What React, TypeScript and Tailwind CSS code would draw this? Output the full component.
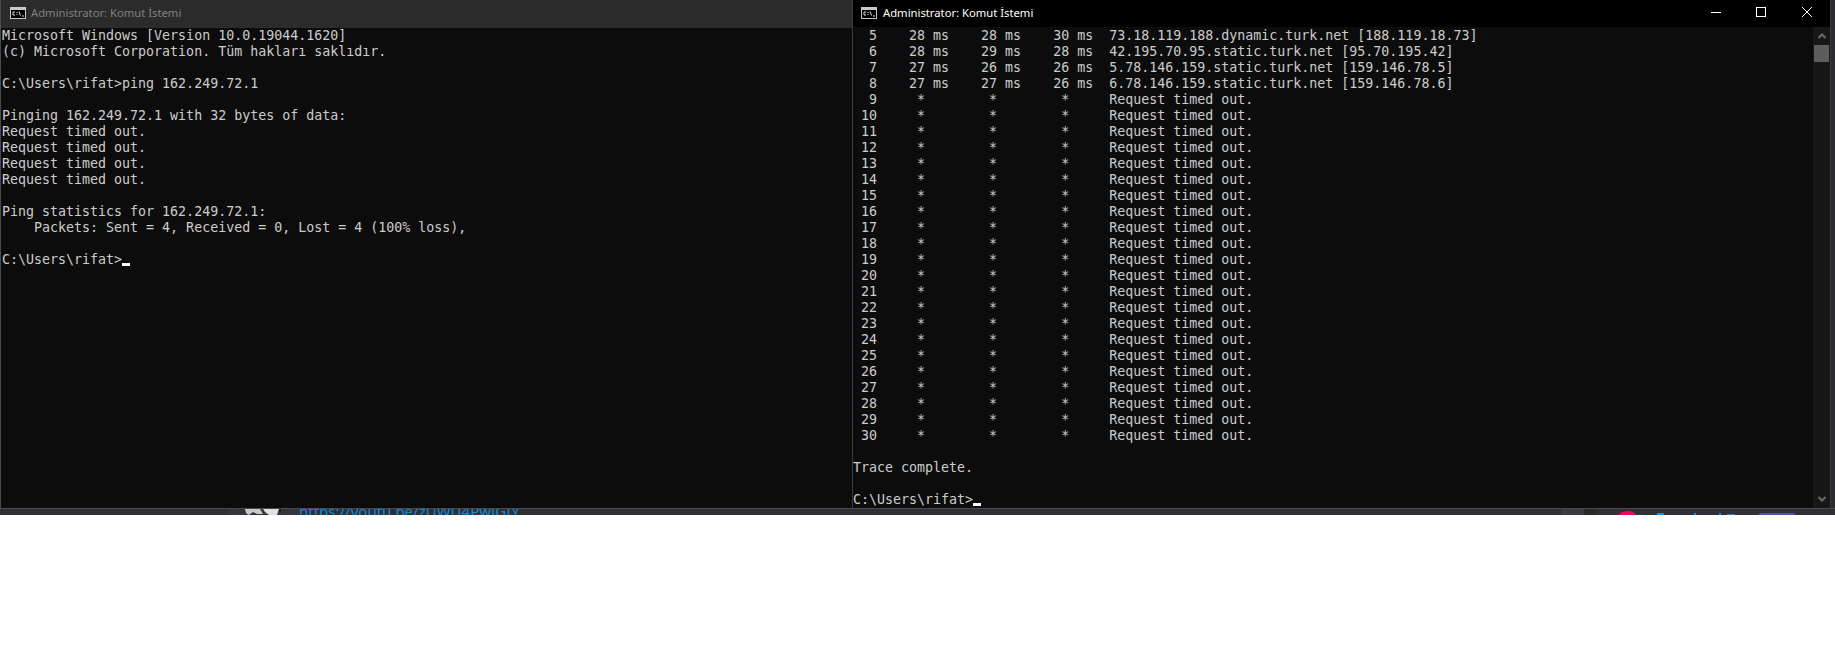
const leftLines = [
  "Microsoft Windows [Version 10.0.19044.1620]",
  "(c) Microsoft Corporation. Tüm hakları saklıdır.",
  "",
  "C:\\Users\\rifat>ping 162.249.72.1",
  "",
  "Pinging 162.249.72.1 with 32 bytes of data:",
  "Request timed out.",
  "Request timed out.",
  "Request timed out.",
  "Request timed out.",
  "",
  "Ping statistics for 162.249.72.1:",
  "    Packets: Sent = 4, Received = 0, Lost = 4 (100% loss),",
  "",
];

const hops = [
  "  5    28 ms    28 ms    30 ms  73.18.119.188.dynamic.turk.net [188.119.18.73]",
  "  6    28 ms    29 ms    28 ms  42.195.70.95.static.turk.net [95.70.195.42]",
  "  7    27 ms    26 ms    26 ms  5.78.146.159.static.turk.net [159.146.78.5]",
  "  8    27 ms    27 ms    26 ms  6.78.146.159.static.turk.net [159.146.78.6]",
];

const rightLines = [...hops];
for (let i = 9; i <= 30; i++) {
  rightLines.push(` ${String(i).padStart(2, " ")}     *        *        *     Request timed out.`);
}
rightLines.push("", "Trace complete.", "");

function ConsoleIcon() {
  return (
    <svg width="16" height="12" viewBox="0 0 16 12" className="shrink-0">
      <rect x="0.5" y="0.5" width="15" height="11" fill="#000" stroke="#c8c8c8" />
      <rect x="1" y="1" width="14" height="2" fill="#c8c8c8" />
      <path d="M3 5H5M3 5V8M3 8H5M7 5V6M7 7V8M9 4.5L10.5 8.5M12 9H14" stroke="#e0e0e0" fill="none" />
    </svg>
  );
}

function Prompt() {
  return (
    <div className="h-4 whitespace-pre">
      C:\Users\rifat&gt;
      <span className="inline-block h-[3px] w-2 bg-white align-[-2px]" />
    </div>
  );
}

function Lines({ lines }: { lines: string[] }) {
  return (
    <>
      {lines.map((line, i) => (
        <div key={i} className="h-4 whitespace-pre">
          {line}
        </div>
      ))}
    </>
  );
}

export default function App() {
  return (
    <div className="h-[648px] w-[1835px] overflow-hidden bg-white">
      <div className="flex h-[508px] w-full bg-[#2b2c31] font-['DejaVu_Sans_Mono',monospace] text-[13.3px] leading-4 text-[#cccccc]">
        <div className="flex w-[852px] shrink-0 flex-col border-l border-[#4a4a4a]">
          <div className="flex h-[28px] shrink-0 items-center gap-[5px] bg-[#2b2b2b] pb-[2px] pl-[9px] font-['Noto_Sans',sans-serif] text-[11.25px] text-[#808080]">
            <ConsoleIcon />
            <span>Administrator: Komut İstemi</span>
          </div>
          <div className="flex-1 bg-[#0c0c0c] pl-px">
            <Lines lines={leftLines} />
            <Prompt />
          </div>
        </div>
        <div className="flex w-[979px] shrink-0 flex-col border-x border-[#3a3a3a]">
          <div className="flex h-[27px] shrink-0 items-center gap-[6px] bg-black pb-[2px] pl-[8px] font-['Noto_Sans',sans-serif] text-[11.25px] text-white">
            <ConsoleIcon />
            <span className="flex-1">Administrator: Komut İstemi</span>
            <svg width="120" height="12" viewBox="0 0 120 12" className="mr-[10px] shrink-0" fill="none" stroke="#fff">
              <path d="M11 5.5H21" />
              <rect x="56.5" y="0.5" width="9" height="9" />
              <path d="M102 0L112 10M112 0L102 10" />
            </svg>
          </div>
          <div className="flex min-h-0 flex-1">
            <div className="flex-1 bg-[#0c0c0c] pt-px">
              <Lines lines={rightLines} />
              <Prompt />
            </div>
            <div className="flex w-[17px] shrink-0 flex-col items-center bg-[#171717]">
              <svg width="8" height="6" viewBox="0 0 8 6" className="mt-[6px]" fill="none" stroke="#6a6a6a" strokeWidth="2">
                <path d="M0.5 5L4 1.5L7.5 5" />
              </svg>
              <div className="mt-[6px] h-[17px] w-[15px] bg-[#5d5d5d]" />
              <div className="flex-1" />
              <svg width="8" height="6" viewBox="0 0 8 6" className="mb-[6px]" fill="none" stroke="#6a6a6a" strokeWidth="2">
                <path d="M0.5 1L4 4.5L7.5 1" />
              </svg>
            </div>
          </div>
        </div>
      </div>
      {/* page behind the windows, only a sliver of it shows */}
      <div className="flex h-[7px] w-full items-start overflow-hidden border-t border-[#4a4a4a] bg-[#2f3036] font-['Noto_Sans',sans-serif] text-[#0f8ad6]">
        <div className="ml-[227px] flex h-full w-[72px] shrink-0 bg-[#34343c]">
          <svg width="72" height="6" viewBox="0 0 72 6" className="shrink-0">
            <path d="M18 0H33L36 5H30L26 3L22 6L19 4Z" fill="#c8c8c8" />
            <path d="M36 0H52L50 6H42L38 3Z" fill="#e0e0e0" />
            <path d="M52 0H54L53 5Z" fill="#111" />
          </svg>
        </div>
        <div className="-mt-[8px] shrink-0 text-[15px] leading-5">https://youtu.be/zUWU4PwJGIY</div>
        <div className="ml-[1041px] h-full w-[23px] shrink-0 bg-[#3a3b42]" />
        <div className="h-full w-[12px] shrink-0 bg-[#27282c]" />
        <div className="ml-[20px] h-[22px] w-[23px] shrink-0 translate-y-[2px] rounded-full bg-[#e0105f]" />
        {/* tops of cut-off letters, too little of them shows to read */}
        <svg width="80" height="6" viewBox="0 0 80 6" className="ml-[18px] shrink-0" fill="#1a8fd8">
          <rect x="0" y="4" width="7" height="2" />
          <rect x="37" y="4" width="2" height="2" />
          <rect x="62" y="4" width="2" height="2" />
          <rect x="70" y="5" width="8" height="1" />
        </svg>
        <div className="ml-[21px] mt-[4px] h-[10px] w-[38px] shrink-0 rounded-t bg-[#5051c8]" />
      </div>
    </div>
  );
}
